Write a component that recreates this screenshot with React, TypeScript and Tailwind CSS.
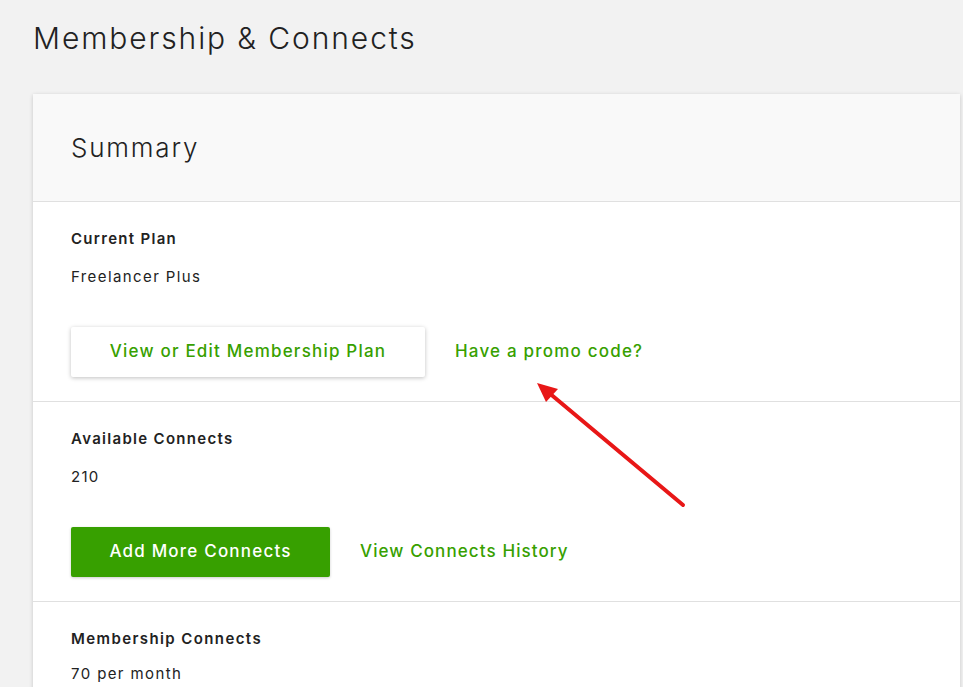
export default function App() {
  return (
    <div
      className="relative min-h-[687px] w-[963px] overflow-hidden bg-[#f2f2f2] text-[#222]"
      style={{ fontFamily: 'Inter, "Open Sans", sans-serif' }}
    >
      <h1 className="pl-[33px] pt-[20px] text-[30px] font-light leading-[36px] tracking-[1.9px] text-[#222]">
        Membership &amp; Connects
      </h1>

      <div className="ml-[33px] mt-[38px] w-[927px] bg-white shadow-[0_1px_4px_rgba(0,0,0,0.18)]">
        {/* Header */}
        <div className="flex h-[108px] items-center border-b border-[#e0e0e0] bg-[#f9f9f9] pl-[38px]">
          <h2 className="text-[26px] font-light leading-none tracking-[1.8px] text-[#222]">Summary</h2>
        </div>

        {/* Current plan */}
        <section className="border-b border-[#e0e0e0] px-[38px] pt-[27px] pb-[24px]">
          <div className="text-[15px] font-semibold leading-[20px] tracking-[1.3px]">Current Plan</div>
          <div className="mt-[18px] text-[15px] leading-[20px] tracking-[1.4px]">Freelancer Plus</div>
          <div className="mt-[40px] flex items-center gap-[30px]">
            <button className="h-[50px] w-[354px] rounded-[2px] bg-white text-[17px] font-medium tracking-[1.2px] text-[#37a000] shadow-[0_1px_4px_rgba(0,0,0,0.25)]">
              View or Edit Membership Plan
            </button>
            <a className="text-[17px] font-medium tracking-[1.2px] text-[#37a000]">Have a promo code?</a>
          </div>
        </section>

        {/* Available connects */}
        <section className="border-b border-[#e0e0e0] px-[38px] pt-[27px] pb-[24px]">
          <div className="text-[15px] font-semibold leading-[20px] tracking-[1.3px]">Available Connects</div>
          <div className="mt-[18px] text-[15px] leading-[20px] tracking-[1.3px]">210</div>
          <div className="mt-[40px] flex items-center gap-[30px]">
            <button className="h-[50px] w-[259px] rounded-[2px] bg-[#37a000] text-[17px] font-medium tracking-[1.2px] text-white shadow-[0_1px_3px_rgba(0,0,0,0.2)]">
              Add More Connects
            </button>
            <a className="text-[17px] font-medium tracking-[1.1px] text-[#37a000]">View Connects History</a>
          </div>
        </section>

        {/* Membership connects */}
        <section className="px-[38px] pt-[27px] pb-[20px]">
          <div className="text-[15px] font-semibold leading-[20px] tracking-[1.4px]">Membership Connects</div>
          <div className="mt-[15px] text-[15px] leading-[20px] tracking-[1.4px]">70 per month</div>
        </section>
      </div>

      {/* annotation arrow */}
      <svg className="absolute left-0 top-0" width="963" height="687" viewBox="0 0 963 687">
        <line x1="683" y1="505" x2="548" y2="392" stroke="#e81717" strokeWidth="4" strokeLinecap="round" />
        <polygon points="537,383 558,389 546,402" fill="#e81717" />
      </svg>
    </div>
  )
}
